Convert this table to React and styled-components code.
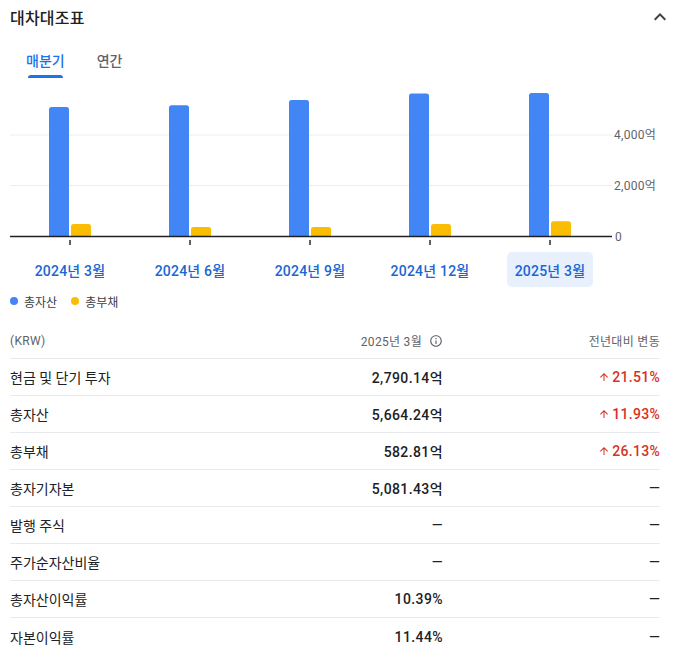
import React from "react";
import styled, { createGlobalStyle } from "styled-components";

const GlobalStyle = createGlobalStyle`
  html, body { margin: 0; padding: 0; background: #fff; }
  body {
    font-family: Roboto, "Noto Sans CJK KR", "Noto Sans", sans-serif;
    color: #202124;
    -webkit-font-smoothing: antialiased;
  }
`;

const Page = styled.div`
  width: 673px;
  box-sizing: border-box;
  padding: 0 13px 0 10px;
`;

const Header = styled.div`
  height: 34px;
  display: flex;
  align-items: center;
  justify-content: space-between;
`;

const Title = styled.h2`
  margin: 0;
  font-size: 16px;
  font-weight: 500;
  color: #202124;
  letter-spacing: 0.2px;
`;

const CollapseButton = styled.button`
  border: none;
  background: none;
  padding: 0;
  margin-right: -12px;
  width: 24px;
  height: 24px;
  display: flex;
  align-items: center;
  justify-content: center;
  color: #3c4043;
`;

const Tabs = styled.div`
  display: flex;
  margin-top: 17px;
`;

const Tab = styled.div`
  padding: 0 16px;
  display: flex;
  flex-direction: column;
  align-items: center;
  font-size: 14px;
  font-weight: 500;
  line-height: 20px;
  color: ${(p) => (p.$active ? "#1a73e8" : "#5f6368")};
`;

const TabIndicator = styled.div`
  margin-top: 4px;
  height: 3px;
  width: calc(100% - 4px);
  border-radius: 3px 3px 0 0;
  background: ${(p) => (p.$active ? "#1a73e8" : "transparent")};
`;

const ChartSvg = styled.svg`
  display: block;
  margin-top: 2px;
`;

const XLabels = styled.div`
  display: flex;
  margin-top: 4px;
`;

const XCell = styled.div`
  width: 120px;
  display: flex;
  justify-content: center;
`;

const XButton = styled.button`
  border: none;
  height: 35px;
  padding: 0 8px;
  border-radius: 5px;
  font-family: inherit;
  font-size: 14px;
  font-weight: 500;
  letter-spacing: 0.2px;
  color: #1967d2;
  background: ${(p) => (p.$selected ? "#e8f0fe" : "transparent")};
`;

const Legend = styled.div`
  display: flex;
  align-items: center;
  gap: 14px;
  margin-top: 6px;
  height: 16px;
`;

const LegendItem = styled.div`
  display: flex;
  align-items: center;
  gap: 6px;
  font-size: 12px;
  color: #3c4043;
`;

const Dot = styled.span`
  width: 8px;
  height: 8px;
  border-radius: 50%;
  background: ${(p) => p.$color};
`;

const Table = styled.div`
  margin-top: 14px;
  width: 650px;
`;

const Row = styled.div`
  display: grid;
  grid-template-columns: 1fr 150px 217px;
  align-items: center;
  height: ${(p) => (p.$head ? "36px" : "37px")};
  border-bottom: ${(p) => (p.$last ? "none" : "1px solid #e8eaed")};
  box-sizing: border-box;
`;

const HeadCell = styled.div`
  font-size: 12px;
  color: #5f6368;
  display: flex;
  align-items: center;
  justify-content: ${(p) => (p.$right ? "flex-end" : "flex-start")};
  gap: 7px;
  letter-spacing: 0.3px;
`;

const Label = styled.div`
  font-size: 14px;
  color: #202124;
`;

const Value = styled.div`
  font-size: 14px;
  font-weight: 500;
  letter-spacing: 0.4px;
  color: #202124;
  text-align: right;
`;

const Change = styled.div`
  display: flex;
  align-items: center;
  justify-content: flex-end;
  gap: 2px;
  font-size: 14px;
  font-weight: 500;
  letter-spacing: 0.3px;
  color: ${(p) => (p.$up ? "#d93025" : "#202124")};
`;

const quarters = ["2024년 3월", "2024년 6월", "2024년 9월", "2024년 12월", "2025년 3월"];
const assets = [5109, 5176, 5386, 5640, 5664.24];
const liabilities = [475, 360, 360, 475, 582.81];

const SCALE = 0.02525;
const BASE = 156;

function barPath(x, w, h) {
  const r = Math.min(2.5, h / 2);
  const y = BASE - h;
  return `M${x} ${BASE} V${y + r} Q${x} ${y} ${x + r} ${y} H${x + w - r} Q${x + w} ${y} ${x + w} ${y + r} V${BASE} Z`;
}

function Chart() {
  return (
    <ChartSvg width="650" height="168" viewBox="0 0 650 168">
      <line x1="0" x2="602" y1={BASE - 2000 * SCALE} y2={BASE - 2000 * SCALE} stroke="#eceef0" strokeWidth="1" />
      <line x1="0" x2="602" y1={BASE - 4000 * SCALE} y2={BASE - 4000 * SCALE} stroke="#eceef0" strokeWidth="1" />
      {quarters.map((q, i) => {
        const c = 60 + 120 * i;
        return (
          <g key={q}>
            <path d={barPath(c - 21, 20, assets[i] * SCALE)} fill="#4285f4" />
            <path d={barPath(c + 1, 20, liabilities[i] * SCALE)} fill="#fbbc04" />
            <rect x={c - 1} y={BASE + 4} width="2" height="5" fill="#5f6368" />
          </g>
        );
      })}
      <line x1="0" x2="602" y1={BASE + 0.5} y2={BASE + 0.5} stroke="#202124" strokeWidth="1.3" />
      <g fontSize="12" fill="#5f6368" fontFamily='Roboto, "Noto Sans CJK KR", sans-serif' letterSpacing="0.3">
        <text x="604" y={BASE - 4000 * SCALE + 4}>4,000억</text>
        <text x="604" y={BASE - 2000 * SCALE + 4}>2,000억</text>
        <text x="605" y={BASE + 4.5}>0</text>
      </g>
    </ChartSvg>
  );
}

const InfoIcon = () => (
  <svg width="14" height="14" viewBox="0 0 24 24" fill="#5f6368">
    <path d="M11 7h2v2h-2zm0 4h2v6h-2zm1-9C6.48 2 2 6.48 2 12s4.48 10 10 10 10-4.48 10-10S17.52 2 12 2zm0 18c-4.41 0-8-3.590-8-8s3.59-8 8-8 8 3.59 8 8-3.59 8-8 8z" />
  </svg>
);

const ArrowUp = () => (
  <svg width="12" height="12" viewBox="0 0 24 24" fill="currentColor">
    <path d="M4 12l1.41 1.41L11 7.83V20h2V7.83l5.58 5.59L20 12l-8-8-8 8z" />
  </svg>
);

const rows = [
  { label: "현금 및 단기 투자", value: "2,790.14억", change: "21.51%" },
  { label: "총자산", value: "5,664.24억", change: "11.93%" },
  { label: "총부채", value: "582.81억", change: "26.13%" },
  { label: "총자기자본", value: "5,081.43억" },
  { label: "발행 주식", value: "—" },
  { label: "주가순자산비율", value: "—" },
  { label: "총자산이익률", value: "10.39%" },
  { label: "자본이익률", value: "11.44%" },
];

export default function App() {
  return (
    <Page>
      <GlobalStyle />
      <Header>
        <Title>대차대조표</Title>
        <CollapseButton aria-label="접기">
          <svg width="24" height="24" viewBox="0 0 24 24" fill="currentColor">
            <path d="M12 8l-6 6 1.41 1.41L12 10.83l4.59 4.58L18 14z" />
          </svg>
        </CollapseButton>
      </Header>
      <Tabs>
        <Tab $active>
          매분기
          <TabIndicator $active />
        </Tab>
        <Tab>
          연간
          <TabIndicator />
        </Tab>
      </Tabs>
      <Chart />
      <XLabels>
        {quarters.map((q, i) => (
          <XCell key={q}>
            <XButton $selected={i === quarters.length - 1}>{q}</XButton>
          </XCell>
        ))}
      </XLabels>
      <Legend>
        <LegendItem>
          <Dot $color="#4285f4" />
          총자산
        </LegendItem>
        <LegendItem>
          <Dot $color="#fbbc04" />
          총부채
        </LegendItem>
      </Legend>
      <Table>
        <Row $head>
          <HeadCell>(KRW)</HeadCell>
          <HeadCell $right>
            2025년 3월
            <InfoIcon />
          </HeadCell>
          <HeadCell $right>전년대비 변동</HeadCell>
        </Row>
        {rows.map((r, i) => (
          <Row key={r.label} $last={i === rows.length - 1}>
            <Label>{r.label}</Label>
            <Value>{r.value}</Value>
            <Change $up={!!r.change}>
              {r.change ? (
                <>
                  <ArrowUp />
                  {r.change}
                </>
              ) : (
                "—"
              )}
            </Change>
          </Row>
        ))}
      </Table>
    </Page>
  );
}
